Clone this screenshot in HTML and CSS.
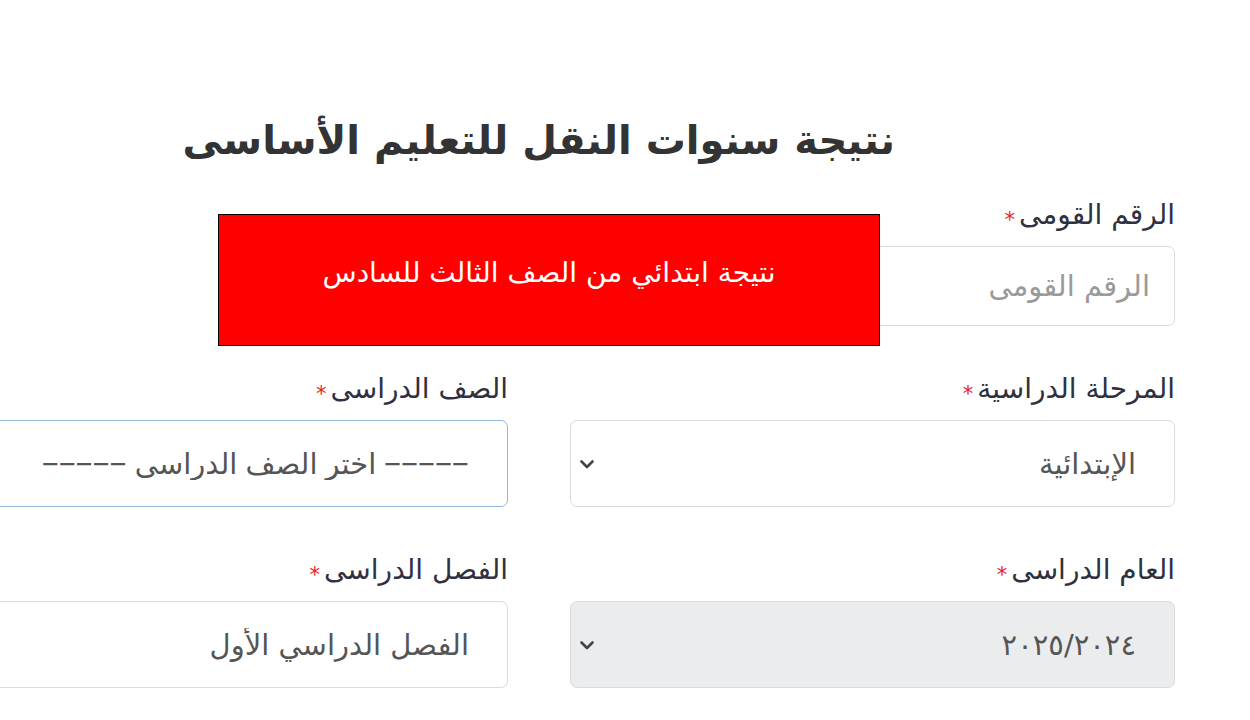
FILE: index.html
```html
<!DOCTYPE html>
<html lang="ar" dir="rtl">
<head>
<meta charset="utf-8">
<title>نتيجة سنوات النقل للتعليم الأساسى</title>
<link rel="stylesheet" href="styles.css">
</head>
<body>
<div class="page">
  <h1 class="title">نتيجة سنوات النقل للتعليم الأساسى</h1>
  <form class="form">
    <div class="field">
      <label class="label"><span class="label-text">الرقم القومى</span><span class="req">*</span></label>
      <input class="control input" type="text" placeholder="الرقم القومى">
    </div>
    <div class="field empty"></div>

    <div class="field">
      <label class="label"><span class="label-text">المرحلة الدراسية</span><span class="req">*</span></label>
      <div class="select-wrap">
        <select class="control select"><option>الإبتدائية</option></select>
        <svg class="chev" viewBox="0 0 16 10" width="16" height="10"><path d="M2.5 2.5 L8 8 L13.5 2.5" fill="none" stroke="#444" stroke-width="2.6" stroke-linecap="round" stroke-linejoin="round"/></svg>
      </div>
    </div>
    <div class="field">
      <label class="label"><span class="label-text">الصف الدراسى</span><span class="req">*</span></label>
      <div class="select-wrap">
        <select class="control select focus"><option>−−−−− اختر الصف الدراسى −−−−−</option></select>
      </div>
    </div>

    <div class="field">
      <label class="label"><span class="label-text">العام الدراسى</span><span class="req">*</span></label>
      <div class="select-wrap">
        <select class="control select disabled"><option>٢٠٢٥/٢٠٢٤</option></select>
        <svg class="chev" viewBox="0 0 16 10" width="16" height="10"><path d="M2.5 2.5 L8 8 L13.5 2.5" fill="none" stroke="#444" stroke-width="2.6" stroke-linecap="round" stroke-linejoin="round"/></svg>
      </div>
    </div>
    <div class="field">
      <label class="label"><span class="label-text">الفصل الدراسى</span><span class="req">*</span></label>
      <div class="select-wrap">
        <select class="control select"><option>الفصل الدراسي الأول</option></select>
      </div>
    </div>
  </form>
  <div class="banner">نتيجة ابتدائي من الصف الثالث للسادس</div>
</div>
</body>
</html>
```
FILE: styles.css
```css
html, body {
  margin: 0;
  padding: 0;
  overflow: hidden;
  background: #fff;
}
body {
  font-family: "DejaVu Sans", "Noto Sans", sans-serif;
  color: #333;
}
.page {
  position: relative;
  width: 1250px;
  height: 720px;
  overflow: hidden;
}
.title {
  margin: 0;
  padding-top: 112px;
  padding-right: 355px;
  font-size: 40px;
  line-height: 56px;
  font-weight: bold;
  color: #333;
  white-space: nowrap;
}
.form {
  display: grid;
  grid-template-columns: 605px 605px;
  column-gap: 62px;
  row-gap: 44px;
  padding-right: 75px;
  margin-top: 28px;
}
.field {
  display: flex;
  flex-direction: column;
}
.label {
  display: flex;
  align-items: center;
  height: 38px;
  margin-bottom: 12px;
  white-space: nowrap;
}
.label-text {
  font-size: 28px;
  line-height: 38px;
  color: #2f3140;
}
.req {
  color: #e52222;
  font-size: 21px;
  line-height: 1;
  margin-right: 4px;
  margin-top: 10px;
}
.control {
  box-sizing: border-box;
  width: 100%;
  border: 1.5px solid #dadada;
  border-radius: 7px;
  background: #fff;
  font-family: "DejaVu Sans", sans-serif;
  font-size: 29px;
  color: #555;
  padding: 0 38px 0 16px;
  direction: rtl;
  outline: none;
}
.input {
  height: 80px;
  padding-right: 24px;
}
.input::placeholder {
  color: #9a9a9a;
}
.select-wrap {
  position: relative;
}
.select {
  height: 87px;
  appearance: none;
  -webkit-appearance: none;
}
.select.focus {
  border-color: #8fb8dc;
  color: #555;
  font-family: "Liberation Sans", "DejaVu Sans", sans-serif;
}
.select.disabled {
  background: #ebecee;
}
.chev {
  position: absolute;
  left: 9px;
  top: 39px;
}
.banner {
  position: absolute;
  left: 218px;
  top: 214px;
  box-sizing: border-box;
  width: 662px;
  height: 132px;
  background: #ff0000;
  border: 1px solid #000;
  color: #fff;
  font-size: 28px;
  line-height: 40px;
  text-align: center;
  padding-top: 38px;
}
```
